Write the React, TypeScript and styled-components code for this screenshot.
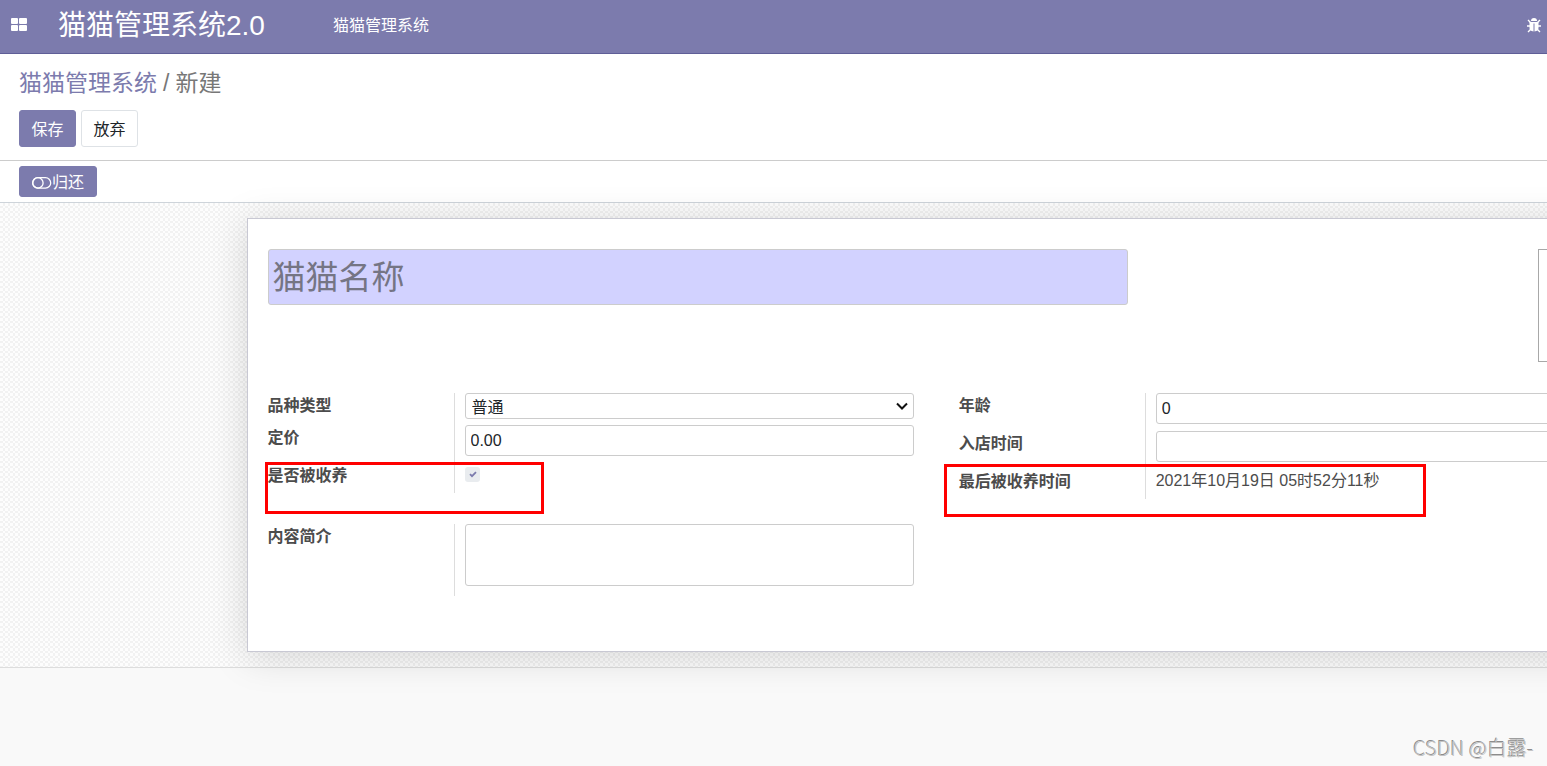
import React from "react";
import styled, { createGlobalStyle, css } from "styled-components";

const Global = createGlobalStyle`
  * { box-sizing: border-box; }
  body {
    margin: 0;
    background: #f9f9f9;
    color: #4c4c4c;
    font: 16px/24px "Liberation Sans", "Noto Sans CJK SC", sans-serif;
  }
  input, select, textarea, button { font: inherit; }
`;

const Page = styled.div`
  min-height: 100vh;
  overflow-x: clip;
  position: relative;
`;

const Navbar = styled.nav`
  display: flex;
  align-items: center;
  height: 54px;
  padding: 0 5px 4px 11px;
  background: #7c7bad;
  border-bottom: 1px solid #5f5e97;
  color: #fff;
`;

const IconButton = styled.button`
  display: flex;
  padding: 0;
  border: 0;
  background: none;
  color: inherit;
`;

const Brand = styled.a`
  margin: 0 68px 0 31px;
  padding-top: 2px;
  font-size: 28px;
  line-height: 40px;
  color: inherit;
  text-decoration: none;
`;

const MenuLink = styled.a`
  margin-right: auto;
  padding-top: 2px;
  color: inherit;
  text-decoration: none;
`;

const ControlPanel = styled.header`
  padding: 13px 19px;
  background: #fff;
  border-bottom: 1px solid #ccc;
`;

const Breadcrumb = styled.div`
  display: flex;
  gap: 6px;
  margin-bottom: 11px;
  font-size: 23px;
  line-height: 32px;
  color: #777;
  a { color: #7c7bad; text-decoration: none; }
`;

const Actions = styled.div`
  display: flex;
  gap: 5px;
`;

const Button = styled.button<{ $primary?: boolean; $small?: boolean }>`
  display: flex;
  align-items: center;
  justify-content: center;
  min-width: 57px;
  height: ${(p) => (p.$small ? 31 : 37)}px;
  padding: 2px ${(p) => (p.$small ? 12 : 11)}px 0;
  border: 1px solid ${(p) => (p.$primary ? "#7c7bad" : "#dee2e6")};
  border-radius: 3px;
  background: ${(p) => (p.$primary ? "#7c7bad" : "#fff")};
  color: ${(p) => (p.$primary ? "#fff" : "#212529")};
`;

const StatusBar = styled.div`
  padding: 5px 19px;
  background: #fff;
  border-bottom: 1px solid #ced4da;
`;

const SheetArea = styled.main`
  padding: 15px 0 15px calc(16% - 1px);
  border-bottom: 1px solid #ddd;
  background: #fff conic-gradient(at 3px 3px, #f2f2f2 25%, #fdfdfd 0 50%, #f2f2f2 0 75%, #fdfdfd 0) 0 0 / 5px 5px;
`;

const Sheet = styled.form`
  width: 90vw;
  padding: 30px 33px 55px 20px;
  border: 1px solid #c8c8d3;
  background: #fff;
  box-shadow: 0 5px 36px rgba(0, 0, 0, 0.15);
`;

const TitleRow = styled.div`
  display: flex;
  justify-content: space-between;
  align-items: flex-start;
  margin-bottom: 31px;
`;

const control = css`
  display: block;
  width: 100%;
  border: 1px solid #ccc;
  border-radius: 3px;
  background: #fff;
  color: #212529;
`;

const NameInput = styled.input`
  ${control}
  width: 65%;
  max-width: 860px;
  height: 56px;
  padding: 2px 4px 0;
  background: #d2d2ff;
  font-size: 33px;
  &::placeholder { color: #757584; opacity: 1; }
`;

const PictureBox = styled.div`
  width: 67px;
  height: 113px;
  border: 1px solid #a8a8a8;
`;

const Groups = styled.div`
  display: grid;
  grid-template-columns: 1fr 1fr;
  gap: 25px 45px;
  align-items: start;
`;

const Group = styled.div`
  position: relative;
`;

const Row = styled.div<{ $height: number }>`
  display: grid;
  grid-template-columns: 187px 1fr;
  min-height: ${(p) => p.$height}px;
`;

const Label = styled.label`
  padding-top: 1px;
  border-right: 1px solid #ddd;
  font-weight: 700;
`;

const Cell = styled.div`
  padding-left: 10px;
`;

const TextInput = styled.input`
  ${control}
  height: 31px;
  padding: 0 5px;
`;

const SelectWrap = styled.div`
  position: relative;
  svg {
    position: absolute;
    right: 6px;
    top: 9px;
    pointer-events: none;
  }
`;

const Select = styled.select`
  ${control}
  appearance: none;
  height: 26px;
  padding: 2px 6px 0;
`;

const TextArea = styled.textarea`
  ${control}
  height: 62px;
  resize: none;
`;

const Check = styled.input`
  display: block;
  appearance: none;
  width: 15px;
  height: 15px;
  margin: 4px 0 0;
  border-radius: 3px;
  background: #e9ecef;
`;

const CheckWrap = styled.div`
  position: relative;
  width: 15px;
  svg {
    position: absolute;
    left: 4px;
    top: 4px;
    pointer-events: none;
  }
`;

const Highlight = styled.div<{ $left: number; $top: number; $width: number; $height: number }>`
  position: absolute;
  left: ${(p) => p.$left}px;
  top: ${(p) => p.$top}px;
  width: ${(p) => p.$width}px;
  height: ${(p) => p.$height}px;
  border: 3px solid #f00;
  pointer-events: none;
`;

const Watermark = styled.div`
  position: absolute;
  right: 13px;
  bottom: 4px;
  font: 300 20px/28px "Noto Sans CJK SC", sans-serif;
  color: #c4c4c4;
  text-shadow: -1px -1px 0 #8c8c8c;
`;

export default function App() {
  return (
    <Page>
      <Global />
      <Navbar>
        <IconButton aria-label="应用">
          <svg width="16" height="14" viewBox="0 0 16 14" fill="#fff">
            <rect width="7" height="6" rx="1" />
            <rect x="8" width="8" height="6" rx="1" />
            <rect y="7" width="7" height="6" rx="1" />
            <rect x="8" y="7" width="8" height="6" rx="1" />
          </svg>
        </IconButton>
        <Brand href="#">猫猫管理系统2.0</Brand>
        <MenuLink href="#">猫猫管理系统</MenuLink>
        <IconButton aria-label="调试">
          <svg width="16" height="16" viewBox="0 0 16 16" fill="#fff">
            <path d="M5 4a3 3 0 0 1 6 0z" />
            <path d="M3.500 5h9v6q0 3-4 3.500V6.500h-1v8q-4-.5-4-3.500z" />
            <path d="M2 3l3 3M14 3l-3 3M1 9h4M15 9h-4M2 15l3-3M14 15l-3-3" stroke="#fff" strokeWidth="1.4" />
          </svg>
        </IconButton>
      </Navbar>
      <ControlPanel>
        <Breadcrumb>
          <a href="#">猫猫管理系统</a>
          <span>/</span>
          <span>新建</span>
        </Breadcrumb>
        <Actions>
          <Button $primary>保存</Button>
          <Button>放弃</Button>
        </Actions>
      </ControlPanel>
      <StatusBar>
        <Button $primary $small>
          <svg width="20" height="12" viewBox="0 0 20 12" fill="none" stroke="#fff" strokeWidth="1.3">
            <rect x="0.7" y="0.7" width="18" height="10.4" rx="5.2" />
            <circle cx="5.9" cy="5.9" r="5.2" />
          </svg>
          归还
        </Button>
      </StatusBar>
      <SheetArea>
        <Sheet>
          <TitleRow>
            <NameInput aria-label="猫猫名称" placeholder="猫猫名称" />
            <PictureBox />
          </TitleRow>
          <Groups>
            <Group>
              <Row $height={32}>
                <Label htmlFor="breed">品种类型</Label>
                <Cell>
                  <SelectWrap>
                    <Select id="breed"><option>普通</option></Select>
                    <svg width="12" height="9" viewBox="0 0 12 9" fill="none" stroke="#111" strokeWidth="2">
                      <path d="M1 1.5l5 5 5-5" />
                    </svg>
                  </SelectWrap>
                </Cell>
              </Row>
              <Row $height={38}>
                <Label htmlFor="price">定价</Label>
                <Cell><TextInput id="price" defaultValue="0.00" /></Cell>
              </Row>
              <Row $height={30}>
                <Label htmlFor="adopted">是否被收养</Label>
                <Cell>
                  <CheckWrap>
                    <Check id="adopted" type="checkbox" defaultChecked />
                    <svg width="8" height="7" viewBox="0 0 8 7" fill="none" stroke="#7c7bad" strokeWidth="1.8">
                      <path d="M1 3.2l2 2 4-4" />
                    </svg>
                  </CheckWrap>
                </Cell>
              </Row>
              <Highlight $left={-3} $top={69} $width={279} $height={52} />
            </Group>
            <Group>
              <Row $height={38}>
                <Label htmlFor="age">年龄</Label>
                <Cell><TextInput id="age" defaultValue="0" /></Cell>
              </Row>
              <Row $height={38}>
                <Label htmlFor="arrival">入店时间</Label>
                <Cell><TextInput id="arrival" /></Cell>
              </Row>
              <Row $height={30}>
                <Label as="span">最后被收养时间</Label>
                <Cell>2021年10月19日 05时52分11秒</Cell>
              </Row>
              <Highlight $left={-15} $top={71} $width={482} $height={53} />
            </Group>
            <Group>
              <Row $height={72}>
                <Label htmlFor="summary">内容简介</Label>
                <Cell><TextArea id="summary" /></Cell>
              </Row>
            </Group>
          </Groups>
        </Sheet>
      </SheetArea>
      <Watermark>CSDN @白露-</Watermark>
    </Page>
  );
}
